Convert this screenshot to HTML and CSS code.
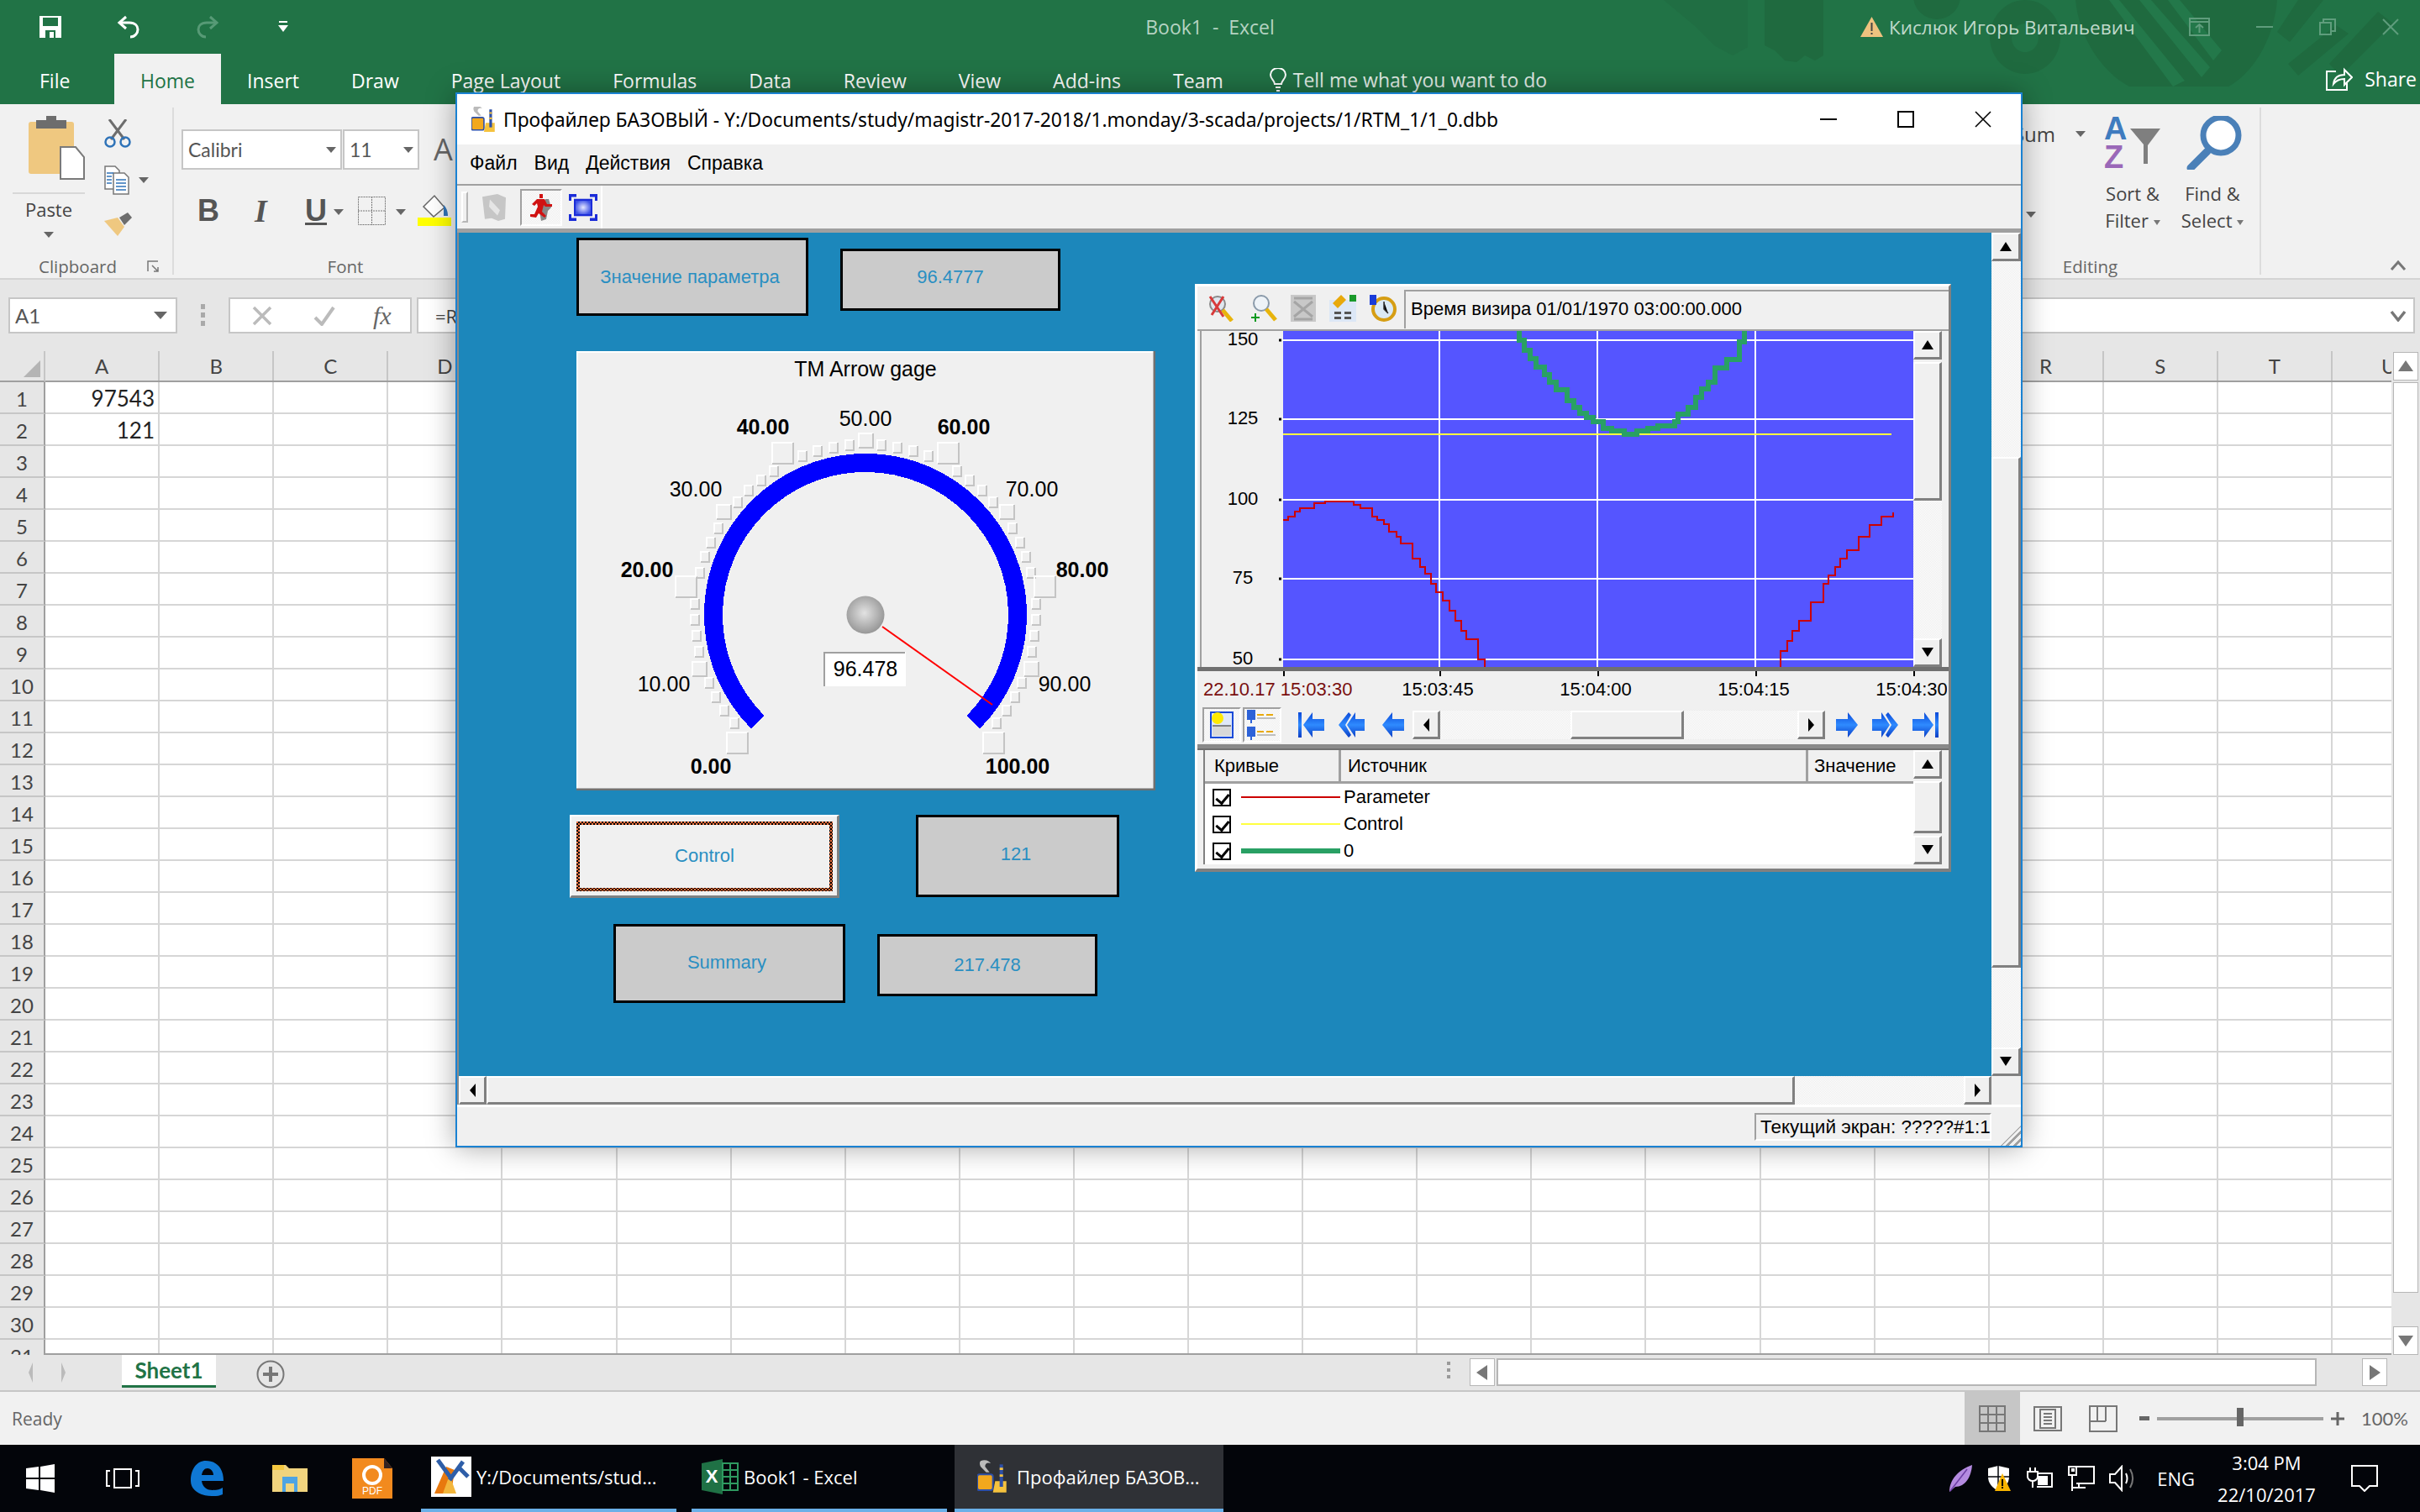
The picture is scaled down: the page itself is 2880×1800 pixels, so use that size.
FILE: index.html
```html
<!DOCTYPE html>
<html lang="en">
<head>
    <meta charset="UTF-8">
    <title>Book1 - Excel</title>
    <link rel="stylesheet" href="styles.css">
</head>
<body>

<div class="desktop">
    <!-- Excel: title bar and tabs -->
    <header class="xl-head">
        <svg class="xl-pattern" width="900" height="124" viewBox="0 0 900 124">
            <g fill="#1f6a3f">
                <circle cx="325" cy="-5" r="28"/>
                <path d="M120 0h70v66l-10 6-12-6-10 8-14-2-12-12-12-6z"/>
                <path d="M0 0h100v56l-18 10-22-12-24-24z" opacity=".5"/>
                <path d="M490 0h240c-4 48-30 88-58 103h-118c-34-18-60-60-64-103z"/>
                <path fill-rule="evenodd" d="M430 0a42 44 0 1 0 .1 0zM430 28a16 17 0 1 1-.1 0z"/>
                <path d="M755 0h30l-40 50-15-12zM800 30l15 10-60 50-12-14zM850 14l18 14-62 62-14-14z"/>
            </g>
            <g fill="#23784a">
                <path d="M530 0l12 0 78 96-14 7zM566 0h14l70 80-10 12zM600 0h14l50 60-10 12z"/>
            </g>
        </svg>
        <div class="xl-titlebar">
            <div class="qat">
                <svg class="qat-save" width="26" height="26" viewBox="0 0 26 26"><path fill="#fff" d="M0 0h26v26h-26z"/><path fill="#217346" d="M4 2h18v10h-18zM7 17h12v9h-2v-7h-5v7h-5z"/></svg>
                <svg class="qat-undo" width="28" height="28" viewBox="0 0 28 28" fill="none" stroke="#fff" stroke-width="3"><path d="M11 2l-8 7 8 7"/><path d="M3 9h12c7 0 10 4 10 8s-3 9-9 9"/></svg>
                <svg class="qat-redo" width="28" height="28" viewBox="0 0 28 28" fill="none" stroke="#579a76" stroke-width="3"><path d="M17 2l8 7-8 7"/><path d="M25 9h-12c-7 0-10 4-10 8s3 9 9 9"/></svg>
                <svg class="qat-more" width="12" height="14" viewBox="0 0 12 14"><path fill="#fff" d="M1 0h10v2h-10zM0 5h12l-6 8z"/></svg>
            </div>
            <div class="doc-title">Book1&nbsp; -&nbsp; Excel</div>
            <div class="title-right">
                <svg width="27" height="24" viewBox="0 0 27 24"><path fill="#eec27f" d="M13.5 0l13.5 24h-27z"/><path fill="#444" d="M12.5 7h2v10h-2zM12.5 19h2v2h-2z"/></svg>
                <span class="user-name">Кислюк Игорь Витальевич</span>
                <svg class="win-ctl first" width="25" height="22" viewBox="0 0 25 22" fill="none" stroke="#5f9d7c" stroke-width="2"><path d="M1 1h23v20h-23zM1 5h23M12.5 18v-10M8 12l4.5-4 4.5 4"/></svg>
                <svg class="win-ctl" width="20" height="4" viewBox="0 0 20 4"><path fill="#5f9d7c" d="M0 1h20v2h-20z"/></svg>
                <svg class="win-ctl" width="20" height="20" viewBox="0 0 20 20" fill="none" stroke="#5f9d7c" stroke-width="2"><path d="M1 5h13v14h-13zM5 5v-4h14v14h-5"/></svg>
                <svg class="win-ctl" width="20" height="20" viewBox="0 0 20 20" fill="none" stroke="#5f9d7c" stroke-width="2"><path d="M1 1l18 18M19 1l-18 18"/></svg>
            </div>
        </div>
        <nav class="xl-tabs">
            <span class="xl-tab file">File</span>
            <span class="xl-tab active">Home</span>
            <span class="xl-tab">Insert</span>
            <span class="xl-tab">Draw</span>
            <span class="xl-tab">Page Layout</span>
            <span class="xl-tab">Formulas</span>
            <span class="xl-tab">Data</span>
            <span class="xl-tab">Review</span>
            <span class="xl-tab">View</span>
            <span class="xl-tab">Add-ins</span>
            <span class="xl-tab">Team</span>
            <span class="tell-me">
                <svg width="20" height="28" viewBox="0 0 20 28" fill="none" stroke="#fff" stroke-width="2"><path d="M6 19c0-4-5-6-5-11a9 8 0 0 1 18 0c0 5-5 7-5 11zM7 23h6M8 27h4"/></svg>
                Tell me what you want to do
            </span>
            <span class="share">
                <svg width="32" height="28" viewBox="0 0 32 28" fill="none" stroke="#fff" stroke-width="2"><path d="M12 5h-11v22h24v-8"/><path d="M9 20c1-8 6-11 13-11v-6l9 9-9 9v-7c-6 0-10 2-13 6z"/></svg>
                Share
            </span>
        </nav>
    </header>

    <!-- Excel: ribbon -->
    <section class="ribbon">
        <div class="rb-group clipboard">
            <div class="rb-body">
                <div class="paste">
                    <svg width="68" height="76" viewBox="0 0 68 76"><rect x="1" y="7" width="54" height="62" rx="3" fill="#efc880"/><path fill="#6d6d6d" d="M10 10v-5h12v-5h12v5h12v10h-36z"/><path fill="#fff" stroke="#7a7a7a" stroke-width="2" d="M39 37h18l10 12v26h-28z"/></svg>
                    <span class="paste-label">Paste</span>
                    <i class="caret"></i>
                </div>
                <div class="clip-small">
                    <svg width="32" height="34" viewBox="0 0 32 34" fill="none"><path stroke="#6d6d6d" stroke-width="3" d="M6 0l18 24M26 0l-18 24"/><circle cx="7" cy="27" r="5.5" stroke="#2f73b8" stroke-width="2.5"/><circle cx="25" cy="27" r="5.5" stroke="#2f73b8" stroke-width="2.5"/></svg>
                    <div class="copy-row">
                        <svg width="30" height="35" viewBox="0 0 30 35"><path fill="#fff" stroke="#777" stroke-width="1.5" d="M1 1h12l5 5v22h-17z"/><path fill="#fff" stroke="#777" stroke-width="1.5" d="M11 9h13l5 5v20h-18z"/><path stroke="#2f73b8" stroke-width="1.5" d="M3 9h8M3 13h6M3 17h6M3 21h6M14 17h12M14 21h12M14 25h12M14 29h12"/></svg>
                        <i class="caret"></i>
                    </div>
                    <svg width="34" height="28" viewBox="0 0 34 28"><path fill="#efc880" d="M0 10l16-4 8 11-8 11z"/><path fill="#6d6d6d" d="M18 6l10-6 5 6-9 9z"/></svg>
                </div>
            </div>
            <div class="rb-label">
                <span>Clipboard</span>
                <svg class="launcher" width="14" height="14" viewBox="0 0 14 14" fill="none" stroke="#777" stroke-width="1.5"><path d="M1 13v-12h12M6 6l7 7M8 13h5v-5"/></svg>
            </div>
        </div>
        <div class="rb-group font-group">
            <div class="combo-row">
                <div class="combo font-name">Calibri<i class="caret"></i></div>
                <div class="combo font-size">11<i class="caret"></i></div>
                <span class="grow-a">A</span>
            </div>
            <div class="format-row">
                <b class="fmt-b">B</b>
                <i class="fmt-i">I</i>
                <u class="fmt-u">U</u>
                <i class="caret"></i>
                <svg class="borders" width="33" height="34" viewBox="0 0 33 34" fill="none" stroke="#777" stroke-width="1" stroke-dasharray="2 1"><path d="M.5.5h32v33h-32zM16.5 0v34M0 17h33"/></svg>
                <i class="caret"></i>
                <svg class="fill-icon" width="40" height="38" viewBox="0 0 40 38"><path fill="#fff" stroke="#666" stroke-width="1.5" d="M7 15l13-13 12 14-13 11z"/><path fill="#2f73b8" d="M31 13c3 3 5 7 5 13h-5z"/><path fill="#ff0" d="M0 28h40v10h-40z"/></svg>
            </div>
            <div class="rb-label">Font</div>
        </div>
        <div class="rb-group editing">
            <div class="rb-body">
                <div class="autosum">
                    <span>Sum <i class="caret"></i></span>
                    <i class="caret lower"></i>
                </div>
                <div class="big-btn sort">
                    <svg width="70" height="64" viewBox="0 0 70 64"><text class="az-a" x="1" y="28">A</text><text class="az-z" x="1" y="62">Z</text><path fill="#7f7f7f" d="M32 15h36l-15 20v-1 23h-5v-23z"/></svg>
                    <span>Sort &amp;</span>
                    <span>Filter <i class="caret tiny"></i></span>
                </div>
                <div class="big-btn find">
                    <svg width="70" height="64" viewBox="0 0 70 64" fill="none" stroke="#4a80b8"><ellipse cx="45" cy="23" rx="21" ry="21" stroke-width="7" fill="#fff"/><path stroke-width="9" stroke-linecap="round" d="M29 42l-20 20"/></svg>
                    <span>Find &amp;</span>
                    <span>Select <i class="caret tiny"></i></span>
                </div>
            </div>
            <div class="rb-label">Editing</div>
        </div>
        <svg class="collapse" width="20" height="14" viewBox="0 0 20 14" fill="none" stroke="#777" stroke-width="3"><path d="M2 12l8-9 8 9"/></svg>
    </section>

    <!-- Excel: formula bar -->
    <section class="formula-bar">
        <div class="name-box">A1<i class="caret big"></i></div>
        <div class="fx-dots"><i></i><i></i><i></i></div>
        <div class="fx-buttons">
            <svg width="24" height="24" viewBox="0 0 24 24" stroke="#bbb" stroke-width="3.5"><path d="M2 2l20 20M22 2l-20 20"/></svg>
            <svg width="26" height="24" viewBox="0 0 26 24" fill="none" stroke="#bbb" stroke-width="4"><path d="M2 14l8 8 14-20"/></svg>
            <span class="fx">fx</span>
        </div>
        <div class="formula-input">=R<svg class="fx-expand" width="20" height="14" viewBox="0 0 20 14" fill="none" stroke="#777" stroke-width="3.5"><path d="M2 2l8 10 8-10"/></svg></div>
    </section>

    <!-- Excel: grid -->
    <section class="grid-wrap">
        <div class="corner-col">
            <div class="corner"><i></i></div>
            <div class="row-heads" id="rowHeads"></div>
        </div>
        <div class="sheet-col">
            <div class="col-heads" id="colHeads"></div>
            <div class="sheet">
                <div class="cell">97543</div>
                <div class="cell">121</div>
            </div>
        </div>
        <div class="xl-vscroll">
            <div class="xl-sbtn"><i class="tri up"></i></div>
            <div class="xl-vthumb"></div>
            <div class="xl-sbtn down"><i class="tri dn"></i></div>
        </div>
    </section>

    <!-- Excel: sheet tabs -->
    <section class="sheet-tabs">
        <div class="tab-arrows"><i class="tri lf grey"></i><i class="tri rt grey"></i></div>
        <div class="sheet-tab">Sheet1</div>
        <svg class="add-sheet" width="34" height="34" viewBox="0 0 34 34" fill="none" stroke="#777"><circle cx="17" cy="17" r="15.5" stroke-width="2"/><path stroke-width="4" d="M17 8v18M8 17h18"/></svg>
        <div class="tab-dots"><i></i><i></i><i></i></div>
        <div class="xl-hscroll">
            <div class="xl-sbtn small"><i class="tri lf"></i></div>
            <div class="xl-hthumb"></div>
            <div class="xl-sbtn small"><i class="tri rt"></i></div>
        </div>
    </section>

    <!-- Excel: status bar -->
    <footer class="xl-status">
        <span class="ready">Ready</span>
        <div class="view-btn active">
            <svg width="32" height="32" viewBox="0 0 32 32" fill="none" stroke="#777" stroke-width="2"><path d="M1 1h30v30h-30zM11 1v30M21 1v30M1 11h30M1 21h30"/></svg>
        </div>
        <div class="view-btn">
            <svg width="34" height="30" viewBox="0 0 34 30" fill="none" stroke="#777" stroke-width="2"><path d="M1 1h32v28h-32zM8 4h18v22h-18zM12 9h10M12 13h10M12 17h10M12 21h10"/></svg>
        </div>
        <div class="view-btn">
            <svg width="34" height="32" viewBox="0 0 34 32" fill="none" stroke="#777" stroke-width="2"><path d="M1 1h32v30h-32zM10 1v18M20 1v18M1 19h19"/></svg>
        </div>
        <div class="zoom-ctl">
            <i class="zoom-minus"></i>
            <div class="zoom-track"><i class="zoom-thumb"></i></div>
            <svg width="16" height="16" viewBox="0 0 16 16"><path fill="#666" d="M6.500 0h3v16h-3zM0 6.500h16v3h-16z"/></svg>
            <span class="zoom-pct">100%</span>
        </div>
    </footer>

    <!-- Windows taskbar -->
    <footer class="taskbar">
        <svg class="tb-start" width="34" height="34" viewBox="0 0 34 34"><path fill="#fff" d="M0 5l15-2v13h-15zM17 3l17-3v16h-17zM0 18h15v13l-15-2zM17 18h17v16l-17-3z"/></svg>
        <svg class="tb-view" width="40" height="24" viewBox="0 0 40 24" fill="none" stroke="#fff" stroke-width="2"><path d="M10 1h20v22h-20zM5 3h-4v18h4M35 3h4v18h-4"/></svg>
        <svg class="tb-edge" width="40" height="42" viewBox="0 0 40 42"><path fill="#0f78d4" d="M0 24c0-14 7-24 18-24 12 0 21 8 21 24h-26c1 8 7 11 13 11 5 0 9-1 12-3v8c-4 2-8 2-13 2-14 0-25-7-25-18zM13 17h14c0-4-3-8-7-8-4 0-6 3-7 8z"/></svg>
        <svg class="tb-folder" width="42" height="32" viewBox="0 0 42 32"><path fill="#f1d47e" d="M0 0h16l4 4h22v28h-42z"/><path fill="#f4c840" d="M0 0h14v6h-14z"/><path fill="#4ea4e4" d="M12 14h18v18h-4v-10h-10v10h-4z"/></svg>
        <svg class="tb-pdf" width="48" height="48" viewBox="0 0 48 48"><path fill="#f28a1e" d="M0 0h38l10 12v36h-48z"/><path fill="#322" d="M38 0l10 12h-10z"/><circle cx="24" cy="20" r="10" fill="none" stroke="#fff" stroke-width="4"/><text class="pdf-text" x="24" y="43">PDF</text></svg>
        <div class="tb-app">
            <svg width="48" height="48" viewBox="0 0 48 48"><path fill="#fff" d="M0 0h48v48h-48z"/><path fill="#e8790e" d="M4 44l14-32 10 4-4 28z"/><path fill="#f3b63c" d="M14 44l8-22 8 22z"/><path stroke="#2e5ea8" stroke-width="5" d="M8 4l16 22M38 6l-16 22M34 14l10 10"/></svg>
            <span>Y:/Documents/stud...</span>
        </div>
        <div class="tb-app excel">
            <svg width="44" height="42" viewBox="0 0 44 42"><path fill="#1f7145" d="M0 5l25-5v42l-25-5z"/><path fill="none" stroke="#2e9a60" stroke-width="2" d="M25 5h18v32h-18zM25 13h18M25 21h18M25 29h18M34 5v32"/><text class="xl-x" x="12" y="28">X</text></svg>
            <span>Book1 - Excel</span>
        </div>
        <div class="tb-app active">
            <svg class="app-logo" width="40" height="50" viewBox="0 0 30 28"><path fill="#bbb" d="M3 0c4-2 8 0 9 2-3-1-5 0-5 3l4 5h-3l-5-5c-1-2-1-4 0-5z"/><rect x="0" y="12" width="14" height="14" rx="2" fill="#f2a81d" stroke="#2d4fa8" stroke-width="1.5"/><path fill="#f5c23e" d="M16 18h10v10h-12z"/><path fill="#2d4fa8" d="M20 3h3v20h-3z"/><path fill="#f5c23e" d="M20 6h3v2h-3zM20 12h3v2h-3z"/></svg>
            <span>Профайлер БАЗОВ...</span>
        </div>
        <div class="tray">
            <svg width="28" height="32" viewBox="0 0 28 32"><path fill="#b48be0" d="M0 32c0-14 10-26 27-32-1 14-8 26-20 26z"/><path stroke="#6d3fa5" stroke-width="1.500" d="M1 31l20-26"/></svg>
            <svg width="30" height="30" viewBox="0 0 30 30"><path fill="#fff" d="M13 0l13 3v10c0 8-5 13-13 17-7-4-12-9-12-17v-10z"/><path stroke="#03050a" stroke-width="1.500" d="M1 13h26M13 0v30"/><path fill="#f8b400" d="M18 9l10 21h-19z"/><path fill="#000" d="M17 16h2v8h-2zM17 25h2v2h-2z"/></svg>
            <svg width="32" height="26" viewBox="0 0 32 26" fill="none" stroke="#fff" stroke-width="2"><path d="M4 0v5M10 0v5M1 5h12v6c0 3-3 5-6 5s-6-2-6-5zM7 16v8"/><path d="M12 7h18v16h-18" /><path fill="#fff" d="M14 11h10v9h-10z"/></svg>
            <svg width="32" height="30" viewBox="0 0 32 30" fill="none" stroke="#fff" stroke-width="2"><path d="M10 1h21v20h-21M1 1h9v10h-9zM5 4h2v2h-2zM5 11v19M5 26h16M13 21v6"/></svg>
            <svg width="32" height="32" viewBox="0 0 32 32" fill="none" stroke="#fff" stroke-width="2"><path d="M1 11h6l8-9v28l-8-9h-6z"/><path d="M20 10c2 4 2 8 0 12"/><path stroke="#777" d="M25 5c4 7 4 15 0 22"/></svg>
            <span class="tray-lang">ENG</span>
            <div class="clock"><span>3:04 PM</span><span>22/10/2017</span></div>
            <svg class="notify" width="32" height="32" viewBox="0 0 32 32" fill="none" stroke="#fff" stroke-width="2"><path d="M1 1h30v24h-9l-6 6-6-6h-9z"/></svg>
        </div>
    </footer>

    <!-- Profiler window -->
    <main class="pf-window">
        <div class="pf-title">
            <svg class="app-logo" width="32" height="30" viewBox="0 0 30 28"><path fill="#bbb" d="M3 0c4-2 8 0 9 2-3-1-5 0-5 3l4 5h-3l-5-5c-1-2-1-4 0-5z"/><rect x="0" y="12" width="14" height="14" rx="2" fill="#f2a81d" stroke="#2d4fa8" stroke-width="1.5"/><path fill="#f5c23e" d="M16 18h10v10h-12z"/><path fill="#2d4fa8" d="M20 3h3v20h-3z"/><path fill="#f5c23e" d="M20 6h3v2h-3zM20 12h3v2h-3z"/></svg>
            <span class="pf-title-text">Профайлер БАЗОВЫЙ - Y:/Documents/study/magistr-2017-2018/1.monday/3-scada/projects/1/RTM_1/1_0.dbb</span>
            <div class="pf-ctls">
                <svg width="20" height="20" viewBox="0 0 20 20"><path stroke="#000" stroke-width="2" d="M0 10h20"/></svg>
                <svg width="20" height="20" viewBox="0 0 20 20" fill="none"><path stroke="#000" stroke-width="2" d="M1 1h18v18h-18z"/></svg>
                <svg width="20" height="20" viewBox="0 0 20 20"><path stroke="#000" stroke-width="1.600" d="M1 1l18 18M19 1l-18 18"/></svg>
            </div>
        </div>
        <div class="pf-menu">
            <span>Файл</span><span>Вид</span><span>Действия</span><span>Справка</span>
        </div>
        <div class="pf-toolbar">
            <div class="tool-strip">
                <i class="grip"></i>
                <svg width="30" height="32" viewBox="0 0 30 30" preserveAspectRatio="none"><path fill="#c6c6c6" d="M1 3l18-3 10 4-1 24-8 2-8-3-8 1z"/><path fill="#e5e5e5" d="M10 6l12 12-3 6-10-10z"/></svg>
                <div class="tool-on">
                    <svg width="34" height="34" viewBox="0 0 34 32"><path fill="#888" d="M22 6l4 0 3 10-4 4-2 10-6 2-2-12z"/><path fill="#d01212" d="M15 0h4v5h-4zM12 6h9l3 6h6v3h-8l-2-2-2 8 5 5-2 2-7-5-3 5-7-1 0-3 5 0 4-9-1-4-3 3-3-2z"/></svg>
                </div>
                <svg width="34" height="32" viewBox="0 0 34 28" preserveAspectRatio="none"><defs><radialGradient id="fitFill"><stop offset="0" stop-color="#e6e8ff"/><stop offset="1" stop-color="#3b50e6"/></radialGradient></defs><rect x="7" y="6" width="20" height="16" fill="url(#fitFill)" stroke="#1a2bd8" stroke-width="2"/><path fill="#1a2bd8" d="M0 0h9v3h-6v4h-3zM25 0h9v7h-3v-4h-6zM0 21h3v4h6v3h-9zM31 21h3v7h-9v-3h6z"/></svg>
            </div>
        </div>
        <div class="pf-work">
            <div class="pf-canvas">
                <div class="hmi-box box-param">Значение параметра</div>
                <div class="hmi-box box-value">96.4777</div>

                <svg class="hmi-gage" width="689" height="523" viewBox="0 0 689 523">
                    <rect class="gage-bg" x="0" y="0" width="689" height="523"/>
                    <path class="gage-edge" d="M1 523v-522h687"/>
                    <path class="gage-edge dark" d="M688 0v522h-688"/>
                    <text class="gage-title" x="344" y="30">TM Arrow gage</text>
                    <g id="gageTicks"></g>
                    <path class="gage-arc" d="M216 442A181 181 0 1 1 472 442"/>
                    <text class="gage-lab" x="344" y="89">50.00</text>
                    <text class="gage-lab bold" x="222" y="99">40.00</text>
                    <text class="gage-lab bold" x="461" y="99">60.00</text>
                    <text class="gage-lab" x="142" y="173">30.00</text>
                    <text class="gage-lab" x="542" y="173">70.00</text>
                    <text class="gage-lab bold" x="84" y="269">20.00</text>
                    <text class="gage-lab bold" x="602" y="269">80.00</text>
                    <text class="gage-lab" x="104" y="405">10.00</text>
                    <text class="gage-lab" x="581" y="405">90.00</text>
                    <text class="gage-lab bold" x="160" y="503">0.00</text>
                    <text class="gage-lab bold" x="525" y="503">100.00</text>
                    <defs><radialGradient id="hubFill" cx=".47" cy=".45" r=".55"><stop offset="0" stop-color="#e2e2e2"/><stop offset="1" stop-color="#979797"/></radialGradient></defs>
                    <circle cx="344" cy="314" r="22.500" fill="url(#hubFill)"/>
                    <path class="gage-needle" d="M364 328L495 421"/>
                    <rect class="gage-val" x="294" y="358" width="98" height="41"/>
                    <path class="gage-val-edge" d="M295 399v-40h96"/>
                    <text class="gage-lab" x="344" y="387">96.478</text>
                </svg>

                <div class="hmi-btn">
                    <div class="hmi-btn-focus"><div class="hmi-btn-face">Control</div></div>
                </div>
                <div class="hmi-box box-control">121</div>
                <div class="hmi-box box-sum">Summary</div>
                <div class="hmi-box box-total">217.478</div>

                <!-- trend chart -->
                <section class="trend">
                    <div class="trend-tools">
                        <svg width="30" height="32" viewBox="0 0 30 32"><circle cx="11" cy="11" r="9" fill="#dfe7ef" stroke="#8a8a8a" stroke-width="2"/><path stroke="#e8b40c" stroke-width="5" d="M17 18l11 13"/><path stroke="#d83a3a" stroke-width="3" d="M2 2l16 24M18 2l-14 22"/></svg>
                        <svg class="tool-zoom" width="32" height="32" viewBox="0 0 32 32"><circle cx="13" cy="10" r="9" fill="#eef3f8" stroke="#8a9aaa" stroke-width="2"/><path stroke="#e8b40c" stroke-width="5" d="M19 17l11 13"/><path stroke="#0a9a20" stroke-width="2" d="M1 27h10M6 22v10"/></svg>
                        <svg width="30" height="32" viewBox="0 0 30 32"><path fill="#c8c8c8" d="M0 0h30v32h-30z"/><path stroke="#a5a5a5" stroke-width="3" d="M4 8l22 18M26 8l-22 18M4 4h22M4 29h22"/></svg>
                        <svg width="32" height="32" viewBox="0 0 32 32"><path fill="#dce7f6" d="M0 6h32v26h-32z"/><path fill="#e8a90c" d="M4 10l10-10 6 6-10 10z"/><path fill="#1a9a2a" d="M24 0h8v8h-8z"/><path fill="#555" d="M6 20h8v3h-8zM18 20h8v3h-8zM6 26h8v3h-8zM18 26h8v3h-8z"/></svg>
                        <svg width="32" height="32" viewBox="0 0 32 32"><circle cx="17" cy="17" r="13" fill="#dbeaf5" stroke="#d69e14" stroke-width="4"/><path stroke="#333" stroke-width="1.500" d="M17 8v9l5 5"/><path fill="#1a3cd8" d="M0 0h8v12h-8z"/></svg>
                        <div class="trend-cursor">Время визира 01/01/1970 03:00:00.000</div>
                    </div>
                    <div class="trend-plot">
                        <svg width="847" height="400" viewBox="0 0 847 400">
                            <g class="axis-labels">
                                <text x="49" y="17">150</text>
                                <text x="49" y="111">125</text>
                                <text x="49" y="207">100</text>
                                <text x="49" y="301">75</text>
                                <text x="49" y="397">50</text>
                            </g>
                            <path class="axis-ticks" d="M92 11h3M92 105h3M92 201h3M92 295h3M92 391h3"/>
                            <g transform="translate(97,0)">
                                <rect class="plot-bg" x="0" y="0" width="750" height="400"/>
                                <path class="plot-grid" d="M0 11h750M0 105h750M0 201h750M0 295h750M0 391h750M186 0v400M374 0v400M562 0v400"/>
                                <path class="curve yellow" d="M0 123H724"/>
                                <path class="curve green" d="M281 0V11H287V23H294V33H301V43H311V52H317V61H325V70H338V83H346V91H353V98H361V103H369V108H381V116H391V119H406V123H421V119H434V116H446V113H466V108H470V99H482V91H491V79H498V69H506V61H514V44H528V34H543V13H549V0"/>
                                <path class="curve red" d="M0 225H6V221H14V215H20V211H37V205H50V203H84V207H92V211H106V221H112V225H120V230H126V239H135V245H140V253H154V271H163V281H169V289H176V301H182V311H190V321H198V333H205V345H212V357H218V367H232V391H240V400"/>
                                <path class="curve red" d="M592 400V381H600V369H606V357H614V345H628V323H643V301H649V291H657V281H663V271H671V261H685V245H698V231H712V221H726V216"/>
                            </g>
                        </svg>
                        <div class="win-vscroll plot-scroll">
                            <div class="bevel sbtn"><i class="tri up black"></i></div>
                            <div class="bevel vthumb"></div>
                            <div class="track"></div>
                            <div class="bevel sbtn"><i class="tri dn black"></i></div>
                        </div>
                    </div>
                    <div class="trend-ruler">
                        <svg width="892" height="44" viewBox="0 0 892 44">
                            <path class="ruler-ticks" d="M103 0v6M289 0v6M477 0v6M665 0v6M853 0v6"/>
                            <text class="ruler-first" x="7" y="29">22.10.17 15:03:30</text>
                            <text class="ruler-lab" x="286" y="29">15:03:45</text>
                            <text class="ruler-lab" x="474" y="29">15:04:00</text>
                            <text class="ruler-lab" x="662" y="29">15:04:15</text>
                            <text class="ruler-lab" x="850" y="29">15:04:30</text>
                        </svg>
                    </div>
                    <div class="trend-nav">
                        <div class="nav-toggle">
                            <svg width="32" height="36" viewBox="0 0 32 36"><path fill="#dfe8f8" stroke="#1a4ad8" stroke-width="2" d="M3 3h26v30h-26z"/><path fill="#d8d8d8" d="M5 19h22v12h-22z"/><circle cx="11" cy="10" r="7" fill="#ffea00"/><path stroke="#222" d="M5 19h22"/></svg>
                        </div>
                        <div class="nav-toggle">
                            <svg width="36" height="36" viewBox="0 0 36 36"><path fill="#2d62d8" d="M0 0h10v12h-4v4h-2v-4h-4z"/><path fill="#e8a90c" d="M12 5h8v2h-8zM23 5h8v2h-8z"/><path stroke="#888" d="M12 10h22"/><path fill="#2d62d8" d="M0 20h10v12h-4v4h-2v-4h-4z"/><path fill="#e8a90c" d="M12 25h8v2h-8zM23 25h8v2h-8z"/><path stroke="#888" d="M12 30h22"/></svg>
                        </div>
                        <svg class="nav-arrow first" width="31" height="30" viewBox="0 0 31 30"><defs><linearGradient id="navFill" x1="0" y1="0" x2="0" y2="1"><stop offset="0" stop-color="#0b49d8"/><stop offset=".5" stop-color="#2f8bff"/><stop offset="1" stop-color="#0a3cc4"/></linearGradient></defs><path class="arr" d="M0 0h4v30h-4zM6 15l11-15v8h14v14h-14v8z"/></svg>
                        <svg class="nav-arrow" width="31" height="30" viewBox="0 0 31 30"><path class="arr" d="M0 15l12-15 3 3-7 12 7 12-3 3zM10 15l10-15v8h11v14h-11v8z"/></svg>
                        <svg class="nav-arrow third" width="26" height="30" viewBox="0 0 26 30"><path class="arr" d="M0 15l12-15v8h14v14h-14v8z"/></svg>
                        <div class="nav-scroll">
                            <div class="bevel nbtn"><i class="tri lf black"></i></div>
                            <div class="track nav-track"><div class="bevel nthumb"></div></div>
                            <div class="bevel nbtn"><i class="tri rt black"></i></div>
                        </div>
                        <svg class="nav-arrow fourth" width="26" height="30" viewBox="0 0 26 30"><path class="arr" d="M26 15l-12-15v8h-14v14h14v8z"/></svg>
                        <svg class="nav-arrow" width="31" height="30" viewBox="0 0 31 30"><path class="arr" d="M31 15l-12-15-3 3 7 12-7 12 3 3zM21 15l-10-15v8h-11v14h11v8z"/></svg>
                        <svg class="nav-arrow" width="31" height="30" viewBox="0 0 31 30"><path class="arr" d="M27 0h4v30h-4zM25 15l-11-15v8h-14v14h14v8z"/></svg>
                    </div>
                    <div class="trend-table">
                        <div class="tbl-main">
                            <div class="tbl-head">
                                <span class="th-curves">Кривые</span>
                                <span class="th-source">Источник</span>
                                <span class="th-value">Значение</span>
                            </div>
                            <div class="tbl-row"><i class="chk"></i><i class="swatch sw-red"></i><span>Parameter</span></div>
                            <div class="tbl-row"><i class="chk"></i><i class="swatch sw-yellow"></i><span>Control</span></div>
                            <div class="tbl-row"><i class="chk"></i><i class="swatch sw-green"></i><span>0</span></div>
                        </div>
                        <div class="win-vscroll tbl-scroll">
                            <div class="bevel sbtn"><i class="tri up black"></i></div>
                            <div class="bevel tthumb"></div>
                            <div class="bevel sbtn"><i class="tri dn black"></i></div>
                        </div>
                    </div>
                </section>
            </div>
            <div class="win-vscroll main-vscroll">
                <div class="bevel sbtn"><i class="tri up black"></i></div>
                <div class="track short"></div>
                <div class="bevel main-thumb"></div>
                <div class="track"></div>
                <div class="bevel sbtn"><i class="tri dn black"></i></div>
            </div>
            <div class="win-hscroll">
                <div class="bevel hbtn"><i class="tri lf black"></i></div>
                <div class="bevel main-hthumb"></div>
                <div class="track"></div>
                <div class="bevel hbtn"><i class="tri rt black"></i></div>
            </div>
            <div class="scroll-corner"></div>
        </div>
        <div class="pf-status">
            <span class="pf-status-cell">Текущий экран: ?????#1:1</span>
            <i class="pf-resize"></i>
        </div>
    </main>
</div>

<script src="script.js"></script>
</body>
</html>
```

FILE: styles.css
```css
* { box-sizing: border-box; }

html, body {
    margin: 0;
    width: 2880px;
    height: 1800px;
    overflow: hidden;
}

body {
    font-family: "Open Sans", "Liberation Sans", sans-serif;
    color: #444;
}

svg { display: block; flex: none; }
i { display: block; }

.desktop {
    position: relative;
    width: 2880px;
    height: 1800px;
    display: flex;
    flex-direction: column;
    background: #fff;
}

/* small triangles */
.caret {
    width: 0;
    height: 0;
    flex: none;
    border-left: 6px solid transparent;
    border-right: 6px solid transparent;
    border-top: 7px solid #666;
}
.caret.tiny { display: inline-block; border-width: 6px 4px 0; vertical-align: middle; }
.caret.big { border-width: 9px 8px 0; }

.tri { width: 0; height: 0; border: 0 solid transparent; }
.tri.up { border-width: 0 9px 13px; border-bottom-color: #777; }
.tri.dn { border-width: 13px 9px 0; border-top-color: #777; }
.tri.lf { border-width: 9px 13px 9px 0; border-right-color: #777; }
.tri.rt { border-width: 9px 0 9px 13px; border-left-color: #777; }
.tri.grey.lf, .tri.grey.rt { border-width: 12px 5px; border-color: transparent; }
.tri.grey.lf { border-right-color: #bbb; border-left-width: 0; }
.tri.grey.rt { border-left-color: #bbb; border-right-width: 0; }
.tri.black.up { border-width: 0 7px 11px; border-bottom-color: #000; }
.tri.black.dn { border-width: 11px 7px 0; border-top-color: #000; }
.tri.black.lf { border-width: 8px 7px 8px 0; border-right-color: #000; }
.tri.black.rt { border-width: 8px 0 8px 7px; border-left-color: #000; }

/* Excel header */
.xl-head {
    position: relative;
    height: 124px;
    flex: none;
    background: #217346;
    overflow: hidden;
}
.xl-pattern { position: absolute; right: 0; top: 0; }
.xl-titlebar {
    position: relative;
    height: 64px;
    display: flex;
    align-items: center;
}
.qat { width: 1345px; display: flex; align-items: center; }
.qat-save { margin-left: 47px; }
.qat-undo { margin-left: 66px; }
.qat-redo { margin-left: 66px; }
.qat-more { margin-left: 70px; }
.doc-title { width: 190px; text-align: center; font-size: 23px; color: #b5d3c2; }
.title-right { margin-left: auto; display: flex; align-items: center; padding-right: 25px; }
.user-name { margin-left: 7px; font-size: 22.500px; color: #c0dacb; width: 300px; white-space: nowrap; }
.win-ctl.first { margin-left: 57px; }
.win-ctl { margin-left: 55px; }
.xl-tabs {
    position: relative;
    height: 60px;
    display: flex;
    align-items: center;
    font-size: 23px;
    color: #fff;
}
.xl-tab { height: 60px; line-height: 64px; padding: 0 31px; }
.xl-tab.file { width: 136px; padding: 0 0 0 47px; }
.xl-tab.active { width: 127px; padding: 0; text-align: center; background: #f1f1f1; color: #217346; }
.tell-me { display: flex; align-items: center; gap: 8px; margin-left: 24px; padding-top: 2px; color: #e3eee8; }
.share { margin-left: auto; display: flex; align-items: center; gap: 14px; padding-right: 4px; }

/* Ribbon */
.ribbon {
    position: relative;
    height: 209px;
    flex: none;
    display: flex;
    background: #f1f1f1;
    border-bottom: 2px solid #d4d4d4;
    font-size: 22px;
}
.rb-group { display: flex; flex-direction: column; margin-top: 4px; margin-bottom: 4px; border-right: 2px solid #dcdcdc; }
.rb-body { flex: 1; display: flex; }
.rb-label { height: 34px; margin-bottom: -7px; display: flex; align-items: center; justify-content: center; font-size: 20.500px; color: #666; }
.clipboard { width: 207px; }
.paste { width: 86px; margin-left: 15px; display: flex; flex-direction: column; align-items: center; padding-top: 10px; position: relative; }
.paste svg { margin: 0 0 0 18px; }
.paste-label { margin-top: 15px; padding-top: 3px; width: 86px; text-align: center; border-top: 2px solid #d8d8d8; }
.paste .caret { margin-top: 12px; }
.clip-small { margin-left: 23px; padding-top: 14px; display: flex; flex-direction: column; gap: 21px; }
.copy-row { display: flex; align-items: center; gap: 11px; }
.clipboard .rb-label { padding-left: 30px; position: relative; }
.launcher { margin-left: 36px; }
.font-group { width: 560px; margin-left: 9px; border: 0; }
.combo-row { display: flex; margin-top: 26px; }
.combo {
    height: 48px;
    display: flex;
    align-items: center;
    justify-content: space-between;
    padding: 0 5px 0 6px;
    background: #fff;
    border: 2px solid #c6c6c6;
    font-size: 23px;
    color: #555;
    font-family: "Lato", "Open Sans", sans-serif;
}
.font-name { width: 191px; }
.font-size { width: 91px; margin-left: 1px; }
.grow-a { margin-left: 17px; font-size: 36px; line-height: 48px; color: #666; }
.format-row { height: 66px; margin-top: 16px; display: flex; align-items: center; font-family: "Liberation Sans", sans-serif; color: #555; font-size: 36px; }
.format-row .caret { margin-top: 2px; }
.fmt-b { margin-left: 19px; width: 30px; }
.fmt-i { margin-left: 38px; width: 16px; font-family: "Liberation Serif", serif; font-weight: bold; font-style: italic; font-size: 38px; }
.fmt-u { margin-left: 44px; width: 26px; font-weight: bold; }
.format-row .fmt-u + .caret { margin-left: 8px; }
.borders { margin-left: 17px; }
.borders + .caret { margin-left: 12px; }
.fill-icon { margin-left: 14px; margin-top: -2px; }
.font-group .rb-label { margin-top: auto; padding-right: 170px; }
.editing { width: 391px; margin-left: auto; margin-right: 189px; position: relative; }
.editing .rb-body { justify-content: flex-end; }
.editing .rb-label { padding-right: 14px; }
.autosum { margin-right: 10px; padding-top: 15px; display: flex; flex-direction: column; }
.autosum span { display: flex; align-items: center; gap: 24px; font-size: 24px; }
.autosum .caret.lower { margin: 76px 0 0 15px; }
.big-btn { display: flex; flex-direction: column; align-items: center; width: 92px; padding-top: 10px; line-height: 32px; font-size: 22px; }
.big-btn svg { margin-bottom: 12px; }
.big-btn .caret { border-top-color: #777; }
.find { margin-right: 10px; }
.sort { margin-right: 3px; }
.az-a { font: bold 38px "Liberation Sans", sans-serif; fill: #3f7cbf; }
.az-z { font: bold 38px "Liberation Sans", sans-serif; fill: #9a68b8; }
.collapse { position: absolute; right: 16px; bottom: 8px; }

/* Formula bar */
.formula-bar {
    height: 85px;
    flex: none;
    background: #e6e6e6;
    display: flex;
    align-items: flex-start;
    padding: 21px 6px 0 10px;
}
.name-box {
    width: 201px;
    height: 43px;
    display: flex;
    align-items: center;
    justify-content: space-between;
    padding: 0 10px 0 6px;
    background: #fff;
    border: 2px solid #c6c6c6;
    font: 24px "Lato", sans-serif;
    color: #555;
}
.fx-dots { width: 61px; padding-top: 8px; display: flex; flex-direction: column; align-items: center; gap: 4px; }
.fx-dots i { width: 5px; height: 6px; background: #a9a9a9; }
.fx-buttons {
    width: 218px;
    height: 43px;
    display: flex;
    align-items: center;
    gap: 49px;
    padding-left: 26px;
    background: #fff;
    border: 2px solid #c6c6c6;
}
.fx { font: italic 30px "Liberation Serif", serif; color: #666; margin-left: -4px; }
.formula-input {
    flex: 1;
    height: 43px;
    margin-left: 6px;
    display: flex;
    align-items: center;
    justify-content: space-between;
    padding: 0 8px 0 20px;
    background: #fff;
    border: 2px solid #c6c6c6;
    font-size: 22px;
}

/* Grid */
.grid-wrap { height: 1195px; flex: none; display: flex; overflow: hidden; background: #fff; }
.corner-col { width: 54px; flex: none; background: #e6e6e6; }
.corner { height: 37px; position: relative; border-right: 2px solid #c6c6c6; border-bottom: 2px solid #9f9f9f; }
.corner i { position: absolute; right: 4px; bottom: 4px; width: 0; height: 0; border-left: 20px solid transparent; border-bottom: 20px solid #b4b4b4; }
.row-heads div {
    height: 38px;
    text-align: center;
    border-right: 2px solid #9f9f9f;
    border-bottom: 2px solid #c6c6c6;
    font: 24px/39px "Lato", sans-serif;
    color: #444;
}
.sheet-col { flex: 1; min-width: 0; display: flex; flex-direction: column; }
.col-heads { height: 37px; flex: none; display: flex; background: #e6e6e6; border-bottom: 2px solid #9f9f9f; overflow: hidden; }
.col-heads div {
    width: 136.1px;
    flex: none;
    text-align: center;
    border-right: 2px solid #c6c6c6;
    font: 24px/36px "Lato", sans-serif;
    color: #444;
}
.sheet {
    flex: 1;
    background:
        repeating-linear-gradient(to right, transparent 0 134.1px, #d6d6d6 134.1px 136.1px),
        repeating-linear-gradient(to bottom, transparent 0 36px, #d6d6d6 36px 38px);
    border-bottom: 2px solid #9f9f9f;
}
.cell { width: 134px; height: 38px; text-align: right; padding-right: 4px; font: 26px/39px "Lato", sans-serif; color: #222; }
.xl-vscroll { width: 34px; flex: none; display: flex; flex-direction: column; gap: 2px; padding: 1px 2px 0; background: #e6e6e6; }
.xl-sbtn { height: 34px; display: flex; align-items: center; justify-content: center; background: #fff; border: 1px solid #b6b6b6; }
.xl-vthumb { height: 1090px; background: #fff; border: 1px solid #b6b6b6; }
.xl-sbtn.down { margin-top: 38px; }

/* Sheet tabs */
.sheet-tabs {
    height: 44px;
    flex: none;
    display: flex;
    background: #e6e6e6;
    border-bottom: 2px solid #c6c6c6;
}
.tab-arrows { width: 145px; display: flex; align-items: center; gap: 34px; padding-left: 34px; }
.sheet-tab {
    width: 112px;
    height: 39px;
    text-align: center;
    background: #fff;
    border-bottom: 3px solid #217346;
    font: bold 26px/36px "Lato", sans-serif;
    color: #217346;
}
.add-sheet { margin: 6px 0 0 48px; }
.tab-dots { margin-left: 1383px; padding-top: 8px; display: flex; flex-direction: column; gap: 4px; }
.tab-dots i { width: 4px; height: 4px; background: #9a9a9a; }
.xl-hscroll { margin-left: 23px; width: 1092px; display: flex; padding-top: 4px; height: 38px; }
.xl-sbtn.small { width: 30px; height: 33px; }
.xl-hthumb { width: 978px; height: 33px; background: #fff; border: 2px solid #b6b6b6; margin: 0 2px; }
.xl-hscroll .xl-sbtn.small:last-child { margin-left: 52px; }

/* Status */
.xl-status {
    height: 63px;
    flex: none;
    display: flex;
    align-items: center;
    background: #f1f1f1;
    font-size: 21px;
    color: #666;
}
.ready { margin-left: 14px; margin-right: auto; }
.view-btn { width: 66px; height: 63px; display: flex; align-items: center; justify-content: center; }
.view-btn.active { background: #c6c6c6; }
.zoom-ctl { display: flex; align-items: center; margin-left: 10px; }
.zoom-minus { width: 12px; height: 5px; background: #666; }
.zoom-track { position: relative; width: 198px; height: 4px; margin: 0 9px; background: #a0a0a0; }
.zoom-thumb { position: absolute; left: 95px; top: -11px; width: 8px; height: 22px; background: #666; }
.zoom-pct { margin-left: 20px; margin-right: 14px; font-size: 22px; font-family: "Lato", sans-serif; }

/* Taskbar */
.taskbar {
    flex: 1;
    display: flex;
    align-items: center;
    background: #03050a;
    color: #fff;
    font-size: 23px;
}
.tb-start { margin-left: 31px; }
.tb-view { margin-left: 61px; }
.tb-edge { margin-left: 61px; }
.tb-folder { margin-left: 57px; }
.tb-pdf { margin-left: 53px; margin-right: 34px; }
.tb-app {
    width: 304px;
    height: 80px;
    margin-right: 18px;
    display: flex;
    align-items: center;
    gap: 6px;
    padding-left: 12px;
    border-bottom: 4px solid #6ab0e8;
}
.tb-app.excel { margin-right: 9px; }
.tb-app.active { width: 320px; padding-left: 27px; gap: 7px; margin-right: 0; background: #2f3136; }
.tb-app span { white-space: nowrap; font-size: 22px; }
.pdf-text { font: 12px "Liberation Sans", sans-serif; fill: #fff; text-anchor: middle; }
.xl-x { font: bold 22px "Liberation Sans", sans-serif; fill: #fff; text-anchor: middle; }
.tray { margin-left: auto; display: flex; align-items: center; gap: 17px; padding-right: 50px; }
.tray-lang { margin: 0 6px 0 8px; font-size: 22px; }
.clock { display: flex; flex-direction: column; align-items: center; gap: 8px; width: 125px; font-size: 22px; line-height: 30px; }
.notify { margin-left: 21px; }

/* Profiler window */
.pf-window {
    position: absolute;
    left: 542px;
    top: 110px;
    width: 1865px;
    height: 1256px;
    display: flex;
    flex-direction: column;
    background: #f0f0f0;
    border: 2px solid #1a82d2;
    box-shadow: 0 0 32px rgba(0, 0, 0, .35);
    font-family: "Liberation Sans", sans-serif;
    color: #000;
}
.pf-title { height: 60px; flex: none; display: flex; align-items: center; background: #fff; padding-left: 17px; }
.pf-title-text { margin-left: 6px; font: 22.800px "Noto Sans", sans-serif; white-space: nowrap; }
.pf-ctls { margin-left: auto; display: flex; align-items: center; gap: 72px; padding-right: 35px; }
.pf-menu { height: 49px; flex: none; display: flex; align-items: center; gap: 20px; padding: 0 0 2px 15px; font-size: 23px; border-bottom: 2px solid #a0a0a0; }
.pf-toolbar { height: 56px; flex: none; border-bottom: 5px solid #a0a0a0; }
.tool-strip { width: 173px; height: 51px; display: flex; align-items: center; gap: 16px; padding: 0 0 0 5px; background: #f0f0f0; border-right: 2px solid #fff; }
.grip { width: 8px; height: 37px; border: 2px solid #b6b6b6; border-left-color: #fff; border-top-color: #fff; }
.tool-on { width: 50px; height: 44px; margin: 0 -8px 0 0; display: flex; align-items: center; justify-content: center; border: 2px solid #fff; border-top-color: #a0a0a0; border-left-color: #a0a0a0; background: repeating-conic-gradient(#fff 0 25%, #ececec 0 50%) 0 0 / 2px 2px; }

.pf-work {
    flex: 1;
    display: grid;
    grid-template-columns: 1fr 35px;
    grid-template-rows: 1fr 34px;
    min-height: 0;
    border-left: 2px solid #8a8a8a;
}
.pf-canvas { position: relative; background: #1c87bb; overflow: hidden; }

.bevel {
    background: #f0f0f0;
    border: solid #808080;
    border-width: 2px 3px 3px 2px;
    border-top-color: #fff;
    border-left-color: #fff;
}
.track { flex: 1; background: repeating-conic-gradient(#fff 0 25%, #ececec 0 50%) 0 0 / 2px 2px; }
.win-vscroll { display: flex; flex-direction: column; }
.sbtn { height: 34px; display: flex; align-items: center; justify-content: center; flex: none; }
.main-vscroll .track.short { flex: none; height: 233px; }
.main-thumb { height: 608px; flex: none; }
.win-hscroll { display: flex; height: 34px; }
.hbtn { width: 33px; display: flex; align-items: center; justify-content: center; flex: none; }
.main-hthumb { width: 1557px; flex: none; }

.pf-status { height: 49px; flex: none; position: relative; border-top: 3px solid #fff; display: flex; justify-content: flex-end; align-items: center; padding-right: 35px; }
.pf-status-cell { height: 33px; width: 282px; padding-left: 5px; white-space: nowrap; border: 2px solid #a0a0a0; border-right-color: #fff; border-bottom-color: #fff; font-size: 22.500px; line-height: 30px; }
.pf-resize { position: absolute; right: 0; bottom: 0; width: 24px; height: 24px; background: repeating-linear-gradient(135deg, #f0f0f0 0 3px, #a0a0a0 3px 6px); clip-path: polygon(100% 0, 100% 100%, 0 100%); }

/* HMI items sit on a free canvas */
.hmi-box {
    position: absolute;
    display: flex;
    align-items: center;
    justify-content: center;
    background: #cbcbcb;
    border: 3px solid #000;
    font-size: 22px;
    color: #2a8fc2;
}
.box-param { left: 140px; top: 6px; width: 276px; height: 93px; padding-right: 6px; }
.box-value { left: 454px; top: 19px; width: 262px; height: 74px; padding-bottom: 6px; }
.box-control { left: 544px; top: 693px; width: 242px; height: 98px; padding: 0 4px 5px 0; }
.box-sum { left: 184px; top: 823px; width: 276px; height: 94px; padding: 0 6px 3px 0; }
.box-total { left: 498px; top: 835px; width: 262px; height: 74px; }

.hmi-gage { position: absolute; left: 140px; top: 141px; }
.gage-bg { fill: #f0f0f0; }
.gage-edge { fill: none; stroke: #fff; stroke-width: 2; }
.gage-edge.dark { stroke: #707070; stroke-width: 3; }
.gage-title { font-size: 25px; text-anchor: middle; }
.gage-lab { font-size: 25px; text-anchor: middle; }
.gage-lab.bold { font-weight: bold; }
.gage-arc { fill: none; stroke: #0000ff; stroke-width: 22; shape-rendering: crispEdges; }
.gage-needle { stroke: #f00; stroke-width: 2; }
.gage-val { fill: #fff; }
.gage-val-edge { fill: none; stroke: #a0a0a0; stroke-width: 2; }
.tick { fill: none; stroke: #fff; stroke-width: 2; shape-rendering: crispEdges; }
.tick-shade { fill: none; stroke: #c4c4c4; stroke-width: 2; shape-rendering: crispEdges; }

.hmi-btn {
    position: absolute;
    left: 132px;
    top: 693px;
    width: 321px;
    height: 99px;
    padding: 6px 5px 5px 6px;
    background: #f0f0f0;
    border: solid #808080;
    border-width: 2px 3px 3px 2px;
    border-top-color: #fff;
    border-left-color: #fff;
}
.hmi-btn-focus { height: 100%; padding: 4px; background: repeating-conic-gradient(#000 0 25%, #f07240 0 50%) 0 0 / 4px 4px; }
.hmi-btn-face { height: 100%; display: flex; align-items: center; justify-content: center; background: #f0f0f0; font-size: 22px; color: #2a8fc2; padding-bottom: 2px; }

/* Trend */
.trend {
    position: absolute;
    left: 876px;
    top: 61px;
    width: 900px;
    height: 700px;
    display: flex;
    flex-direction: column;
    background: #f0f0f0;
    border: solid #808080;
    border-width: 3px 3px 4px 3px;
    border-top-color: #fff;
    border-left-color: #fff;
}
.trend-tools { height: 53px; flex: none; display: flex; align-items: center; gap: 16px; padding-left: 13px; border-bottom: 2px solid #a0a0a0; }
.tool-zoom { margin-left: 4px; }
.trend-cursor { height: 46px; flex: 1; margin: 3px 0 0 -7px; padding-left: 6px; font-size: 22px; line-height: 42px; border: 2px solid #a0a0a0; border-right: 0; border-bottom: 0; white-space: nowrap; }
.trend-plot { height: 400px; flex: none; display: flex; margin-left: 3px; border-left: 2px solid #a0a0a0; }
.plot-scroll { width: 34px; flex: none; }
.vthumb { height: 165px; margin-top: 3px; flex: none; }
.axis-labels text { font-size: 22px; text-anchor: middle; }
.axis-ticks { stroke: #000; stroke-width: 3; fill: none; }
.plot-bg { fill: #5555ff; }
.plot-grid { stroke: #fff; stroke-width: 2; fill: none; shape-rendering: crispEdges; }
.curve { fill: none; shape-rendering: crispEdges; }
.curve.yellow { stroke: #ffff40; stroke-width: 2; }
.curve.green { stroke: #29a064; stroke-width: 6; }
.curve.red { stroke: #cc0000; stroke-width: 2; }
.trend-ruler { height: 49px; flex: none; border-top: 5px solid #707070; }
.ruler-ticks { stroke: #000; stroke-width: 2; fill: none; }
.ruler-first { font-size: 22px; fill: #7a1010; }
.ruler-lab { font-size: 22px; text-anchor: middle; }
.trend-nav { height: 48px; flex: none; display: flex; align-items: center; padding: 0 0 3px 6px; border-bottom: 5px solid #8a8a8a; }
.nav-toggle { width: 46px; height: 42px; margin-right: 2px; display: flex; align-items: center; justify-content: center; border: 2px solid #a0a0a0; border-right-color: #fff; border-bottom-color: #fff; background: repeating-conic-gradient(#fff 0 25%, #ececec 0 50%) 0 0 / 2px 2px; }
.nav-arrow.first { margin-left: 18px; }
.nav-arrow { margin-left: 17px; }
.nav-arrow.third { margin-left: 21px; }
.nav-arrow.fourth { margin-left: 13px; }
.arr { fill: url(#navFill); }
.nav-scroll { height: 34px; width: 491px; margin-left: 10px; display: flex; }
.nbtn { width: 33px; display: flex; align-items: center; justify-content: center; flex: none; }
.nav-track { position: relative; }
.nthumb { position: absolute; left: 155px; top: 0; width: 135px; height: 34px; }
.trend-table { flex: 1; display: flex; padding: 0 8px 5px 7px; border-top: 2px solid #707070; }
.tbl-main { flex: 1; display: flex; flex-direction: column; background: #fff; border-left: 2px solid #808080; }
.tbl-head { height: 40px; flex: none; display: flex; background: #f0f0f0; border-bottom: 3px solid #a0a0a0; font-size: 22px; line-height: 38px; }
.th-curves { width: 162px; padding-left: 11px; border-right: 3px solid #a0a0a0; }
.th-source { width: 556px; padding-left: 8px; border-right: 3px solid #a0a0a0; }
.th-value { flex: 1; padding-left: 7px; }
.tbl-row { height: 32px; flex: none; display: flex; align-items: center; font-size: 22px; }
.chk { position: relative; width: 22px; height: 21px; margin-left: 9px; border: 2px solid #000; background: #fff; }
.chk::after { content: ""; position: absolute; left: 5px; top: 1px; width: 7px; height: 12px; border: solid #000; border-width: 0 3px 3px 0; transform: rotate(40deg); }
.swatch { width: 118px; margin: 0 4px 0 12px; }
.sw-red { height: 2px; background: #cc0000; }
.sw-yellow { height: 2px; background: #ffff40; }
.sw-green { height: 6px; background: #29a064; }
.tbl-scroll { width: 34px; flex: none; }
.tthumb { flex: 1; margin: 3px 0; }
```

FILE: script.js
```js
// Excel row numbers and column letters
const rowHeads = document.getElementById('rowHeads');
for (let i = 1; i <= 31; i++) {
    const row = document.createElement('div');
    row.textContent = i;
    rowHeads.appendChild(row);
}

const colHeads = document.getElementById('colHeads');
for (const letter of 'ABCDEFGHIJKLMNOPQRSTU') {
    const col = document.createElement('div');
    col.textContent = letter;
    colHeads.appendChild(col);
}

// gage scale: one tick per 2 units, from 225deg round to -45deg
const gageTicks = document.getElementById('gageTicks');
const svgNS = 'http://www.w3.org/2000/svg';

function addShape(tag, cls, attrs) {
    const el = document.createElementNS(svgNS, tag);
    el.setAttribute('class', cls);
    for (const key in attrs) el.setAttribute(key, attrs[key]);
    gageTicks.appendChild(el);
}

for (let value = 0; value <= 100; value += 2) {
    const t = (225 - value * 2.7) * Math.PI / 180;
    let r = 203, w = 10, h = 12;
    if (value % 20 === 0) { r = 216; w = 25; h = 25; }
    else if (value % 10 === 0) { r = 208; w = 17; h = 17; }
    const x = Math.round(344 + r * Math.cos(t) - w / 2);
    const y = Math.round(314 - r * Math.sin(t) - h / 2);
    addShape('path', 'tick', { d: `M${x} ${y + h}V${y}H${x + w}` });
    addShape('path', 'tick-shade', { d: `M${x + w} ${y}V${y + h}H${x}` });
}
```
